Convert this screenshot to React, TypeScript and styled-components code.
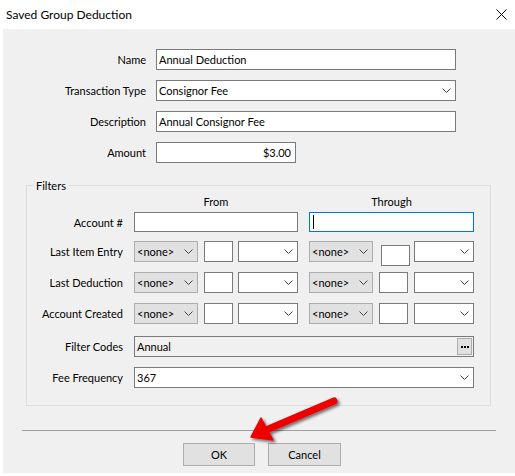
import styled, { createGlobalStyle } from "styled-components";

const GlobalStyle = createGlobalStyle`
  html, body {
    margin: 0;
    padding: 0;
    background: #ffffff;
  }

  body {
    font-family: Lato, "Liberation Sans", sans-serif;
    font-size: 11px;
    color: #000000;
  }
`;

const Window = styled.div`
  position: relative;
  width: 515px;
  height: 476px;
  background: #ffffff;
  overflow: hidden;
`;

const TitleBar = styled.div`
  height: 29px;
  display: flex;
  align-items: center;
  justify-content: space-between;
  padding: 0 8px 0 6px;
  box-sizing: border-box;
`;

const Title = styled.span`
  font-size: 12px;
  color: #000000;
`;

const Body = styled.div`
  margin-left: 3px;
  height: 444px;
  background: #f0f0f0;
  padding-top: 20px;
  box-sizing: border-box;
  display: flex;
  flex-direction: column;
`;

const MainGrid = styled.div`
  display: grid;
  grid-template-columns: 143px auto;
  column-gap: 10px;
  row-gap: 10px;
  align-items: center;
`;

const Label = styled.span`
  text-align: right;
  white-space: nowrap;
`;

const TextBox = styled.div<{
  $w?: number;
  $h?: number;
  $align?: "left" | "right";
  $readOnly?: boolean;
  $focus?: boolean;
}>`
  box-sizing: border-box;
  width: ${(p) => (p.$w ? `${p.$w}px` : "100%")};
  height: ${(p) => p.$h ?? 21}px;
  border: 1px solid ${(p) => (p.$focus ? "#0078d7" : "#7a7a7a")};
  background: ${(p) => (p.$readOnly ? "#f0f0f0" : "#ffffff")};
  display: flex;
  align-items: center;
  justify-content: ${(p) => (p.$align === "right" ? "flex-end" : "space-between")};
  padding: ${(p) => (p.$align === "right" ? "0 4px 0 2px" : "0 1px 0 2px")};
  white-space: nowrap;
`;

const Caret = styled.span`
  width: 1px;
  height: 14px;
  margin-left: 1px;
  background: #000000;
`;

const EllipsisButton = styled.span`
  box-sizing: border-box;
  width: 15px;
  height: 17px;
  border: 1px solid #adadad;
  background: #e1e1e1;
  display: flex;
  align-items: center;
  justify-content: center;
`;

const ComboBox = styled.div<{ $w?: number; $gray?: boolean }>`
  box-sizing: border-box;
  width: ${(p) => (p.$w ? `${p.$w}px` : "100%")};
  height: 21px;
  border: 1px solid ${(p) => (p.$gray ? "#adadad" : "#7a7a7a")};
  background: ${(p) => (p.$gray ? "#e1e1e1" : "#ffffff")};
  display: flex;
  align-items: center;
  justify-content: space-between;
  padding: 0 4px 0 2px;
  white-space: nowrap;
`;

const SmallBox = styled.div<{ $shift?: boolean }>`
  box-sizing: border-box;
  width: 29px;
  height: 21px;
  border: 1px solid #7a7a7a;
  background: #ffffff;
  align-self: flex-start;
  margin: ${(p) => (p.$shift ? "4px -2px 0 2px" : "0")};
`;

const DateGroup = styled.div`
  display: flex;
  justify-content: space-between;
  align-items: center;
  height: 21px;
`;

const GroupBox = styled.fieldset`
  box-sizing: border-box;
  width: 465px;
  margin: 16px 0 0 23px;
  padding: 3px 16px 17px 0;
  border: 1px solid #dcdcdc;
  min-width: 0;
`;

const Legend = styled.legend`
  margin-left: 6px;
  padding: 0 3px;
  font-size: 11px;
`;

const FilterBody = styled.div`
  display: flex;
  flex-direction: column;
  gap: 10px;
`;

const FilterRow = styled.div<{ $h?: number; $nudge?: number }>`
  display: grid;
  grid-template-columns: 96px 164px 165px;
  column-gap: 11px;
  align-items: center;
  height: ${(p) => p.$h ?? 21}px;
  margin-top: ${(p) => p.$nudge ?? 0}px;
`;

const ColumnHead = styled.span`
  text-align: center;
  line-height: 14px;
`;

const Span2 = styled.div`
  grid-column: 2 / 4;
`;

const Separator = styled.div`
  height: 1px;
  margin: 24px 19px 0 19px;
  background: #a0a0a0;
`;

const ButtonRow = styled.div`
  display: flex;
  justify-content: center;
  gap: 13px;
  margin-top: 12px;
  padding-left: 6px;
`;

const Button = styled.div<{ $w: number }>`
  box-sizing: border-box;
  width: ${(p) => p.$w}px;
  height: 23px;
  border: 1px solid #adadad;
  background: #e1e1e1;
  display: flex;
  align-items: center;
  justify-content: center;
`;

const Overlay = styled.svg`
  position: absolute;
  left: 0;
  top: 0;
  pointer-events: none;
`;

function Chevron() {
  return (
    <svg width="9" height="5" viewBox="0 0 9 5">
      <path d="M0.5 0.5 L4.5 4.5 L8.5 0.5" fill="none" stroke="#444" strokeWidth="1" />
    </svg>
  );
}

function Dots() {
  return (
    <svg width="8" height="2" viewBox="0 0 8 2">
      <rect x="0" y="0" width="2" height="2" fill="#000" />
      <rect x="3" y="0" width="2" height="2" fill="#000" />
      <rect x="6" y="0" width="2" height="2" fill="#000" />
    </svg>
  );
}

function CloseIcon() {
  return (
    <svg width="11" height="11" viewBox="0 0 11 11">
      <path d="M0.5 0.5 L10.5 10.5 M10.5 0.5 L0.5 10.5" stroke="#000" strokeWidth="1" />
    </svg>
  );
}

function DateRange({ shiftBox }: { shiftBox?: boolean }) {
  return (
    <DateGroup>
      <ComboBox $w={64} $gray>
        &lt;none&gt;
        <Chevron />
      </ComboBox>
      <SmallBox $shift={shiftBox} />
      <ComboBox $w={60}>
        <span />
        <Chevron />
      </ComboBox>
    </DateGroup>
  );
}

const dateFilters = [
  { label: "Last Item Entry", shift: true },
  { label: "Last Deduction", shift: false },
  { label: "Account Created", shift: false },
];

export default function App() {
  return (
    <>
      <GlobalStyle />
      <Window>
        <TitleBar>
          <Title>Saved Group Deduction</Title>
          <CloseIcon />
        </TitleBar>

        <Body>
          <MainGrid>
            <Label>Name</Label>
            <TextBox $w={300}>Annual Deduction</TextBox>

            <Label>Transaction Type</Label>
            <ComboBox $w={300}>
              Consignor Fee
              <Chevron />
            </ComboBox>

            <Label>Description</Label>
            <TextBox $w={300}>Annual Consignor Fee</TextBox>

            <Label>Amount</Label>
            <TextBox $w={140} $align="right">
              $3.00
            </TextBox>
          </MainGrid>

          <GroupBox>
            <Legend>Filters</Legend>
            <FilterBody>
              <FilterRow $h={14}>
                <span />
                <ColumnHead>From</ColumnHead>
                <ColumnHead>Through</ColumnHead>
              </FilterRow>

              <FilterRow $h={20} $nudge={-7}>
                <Label>Account #</Label>
                <TextBox $h={20} />
                <TextBox $h={20} $focus>
                  <Caret />
                </TextBox>
              </FilterRow>

              {dateFilters.map((f, i) => (
                <FilterRow key={f.label} $nudge={i === 0 ? -1 : 0}>
                  <Label>{f.label}</Label>
                  <DateRange />
                  <DateRange shiftBox={f.shift} />
                </FilterRow>
              ))}

              <FilterRow $nudge={2}>
                <Label>Filter Codes</Label>
                <Span2>
                  <TextBox $readOnly>
                    Annual
                    <EllipsisButton>
                      <Dots />
                    </EllipsisButton>
                  </TextBox>
                </Span2>
              </FilterRow>

              <FilterRow>
                <Label>Fee Frequency</Label>
                <Span2>
                  <ComboBox>
                    367
                    <Chevron />
                  </ComboBox>
                </Span2>
              </FilterRow>
            </FilterBody>
          </GroupBox>

          <Separator />

          <ButtonRow>
            <Button $w={72}>OK</Button>
            <Button $w={73}>Cancel</Button>
          </ButtonRow>
        </Body>

        {/* red pointer aimed at the OK button */}
        <Overlay width="515" height="476" viewBox="0 0 515 476">
          <defs>
            <filter id="arrowShadow" x="-20%" y="-40%" width="140%" height="180%">
              <feDropShadow dx="2" dy="2" stdDeviation="1.5" floodColor="#000" floodOpacity="0.55" />
            </filter>
          </defs>
          <g filter="url(#arrowShadow)">
            <path d="M334 401 L266 430" stroke="#ee0000" strokeWidth="7" strokeLinecap="round" />
            <path d="M251 437 L261 418 L273 440 Z" fill="#ee0000" stroke="#ee0000" strokeWidth="1.5" strokeLinejoin="round" />
          </g>
        </Overlay>
      </Window>
    </>
  );
}
